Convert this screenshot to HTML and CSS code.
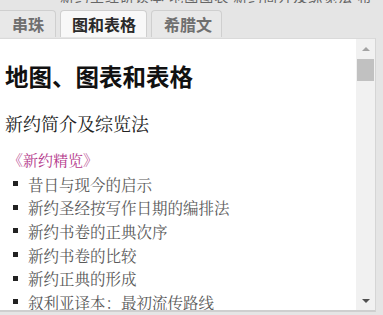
FILE: index.html
```html
<!DOCTYPE html>
<html lang="zh-CN">
<head>
  <meta charset="UTF-8">
  <meta name="viewport" content="width=device-width, initial-scale=1.0">
  <title>地图、图表和表格</title>
  <link rel="stylesheet" href="styles.css">
</head>
<body>
  <div class="cutline"><span>新约圣经研读本 地图图表 新约简介及综览法 希腊文</span></div>
  <div class="tabs">
    <div class="tab">串珠</div>
    <div class="tab active">图和表格</div>
    <div class="tab last">希腊文</div>
  </div>
  <div class="panel">
    <div class="content">
      <h1>地图、图表和表格</h1>
      <h2>新约简介及综览法</h2>
      <p class="book">《新约精览》</p>
      <ul class="items">
        <li>昔日与现今的启示</li>
        <li>新约圣经按写作日期的编排法</li>
        <li>新约书卷的正典次序</li>
        <li>新约书卷的比较</li>
        <li>新约正典的形成</li>
        <li>叙利亚译本：最初流传路线</li>
      </ul>
    </div>
    <div class="scrollbar">
      <div class="arrow up"></div>
      <div class="thumb"></div>
      <div class="track"></div>
      <div class="arrow down"></div>
    </div>
  </div>
</body>
</html>
```

FILE: styles.css
```css
body {
  margin: 0;
  background-color: #e5e5e5;
  font-family: "Noto Sans CJK SC", sans-serif;
  height: 315px;
  overflow: hidden;
}
.cutline {
  height: 3px;
  overflow: hidden;
  padding-left: 60px;
  color: #666;
  font-size: 14px;
  line-height: 14px;
}
.cutline span {
  display: block;
  margin-top: -11px;
  letter-spacing: 1px;
}
.tabs {
  display: flex;
  gap: 4px;
  margin-left: -3px;
  padding-top: 7px;
}
.tab {
  background: #e8e8e8;
  border: 1px solid #cfcfcf;
  border-bottom: none;
  border-radius: 4px 4px 0 0;
  color: #6f6f6f;
  font-weight: bold;
  font-size: 16px;
  height: 27px;
  line-height: 26px;
  padding: 0 11px 0 14px;
  box-sizing: border-box;
}
.tab.active {
  background: #f8f8f8;
  color: #2a2a2a;
  padding: 0 10px 0 11px;
}
.tab.last {
  padding: 0 9px 0 12px;
}
.panel {
  display: flex;
  margin-top: 1px;
  margin-right: 7px;
  height: 274px;
  background: #fff;
  border-top: 1px solid #dadada;
  border-bottom: 2px solid #cfcfcf;
  border-right: 1px solid #d5d5d5;
  box-sizing: border-box;
}
.content {
  flex: 1;
  padding: 22px 0 0 5px;
  overflow: hidden;
}
h1 {
  margin: 0;
  font-size: 23.5px;
  line-height: 30px;
  font-weight: bold;
  color: #111;
}
h2 {
  margin: 22px 0 0;
  font-family: "Liberation Serif", "Noto Serif CJK SC", "Noto Sans CJK SC", serif;
  font-size: 18px;
  line-height: 24px;
  font-weight: normal;
  color: #222;
}
.book {
  margin: 12px 0 0 3px;
  font-family: "Liberation Serif", "Noto Serif CJK SC", "Noto Sans CJK SC", serif;
  font-size: 15px;
  line-height: 24px;
  color: #b53a8c;
}
.items {
  list-style: none;
  margin: -1px 0 0;
  padding: 0 0 0 8px;
  font-family: "Liberation Serif", "Noto Serif CJK SC", "Noto Sans CJK SC", serif;
  font-size: 15.5px;
  color: #5a5a5a;
}
.items li {
  display: flex;
  align-items: center;
  gap: 10px;
  height: 23.6px;
}
.items li::before {
  content: "";
  width: 5px;
  height: 5px;
  background: #222;
  flex: none;
}
.scrollbar {
  width: 19px;
  background: #f1f1f1;
  display: flex;
  flex-direction: column;
  align-items: center;
  padding: 8px 0 7px;
  box-sizing: border-box;
}
.arrow {
  width: 0;
  height: 0;
  border-left: 4px solid transparent;
  border-right: 4px solid transparent;
}
.arrow.up {
  border-bottom: 4px solid #a3a3a3;
}
.arrow.down {
  border-top: 4px solid #505050;
}
.thumb {
  width: 17px;
  height: 22px;
  background: #c1c1c1;
  margin-top: 8px;
}
.track {
  flex: 1;
}
```
